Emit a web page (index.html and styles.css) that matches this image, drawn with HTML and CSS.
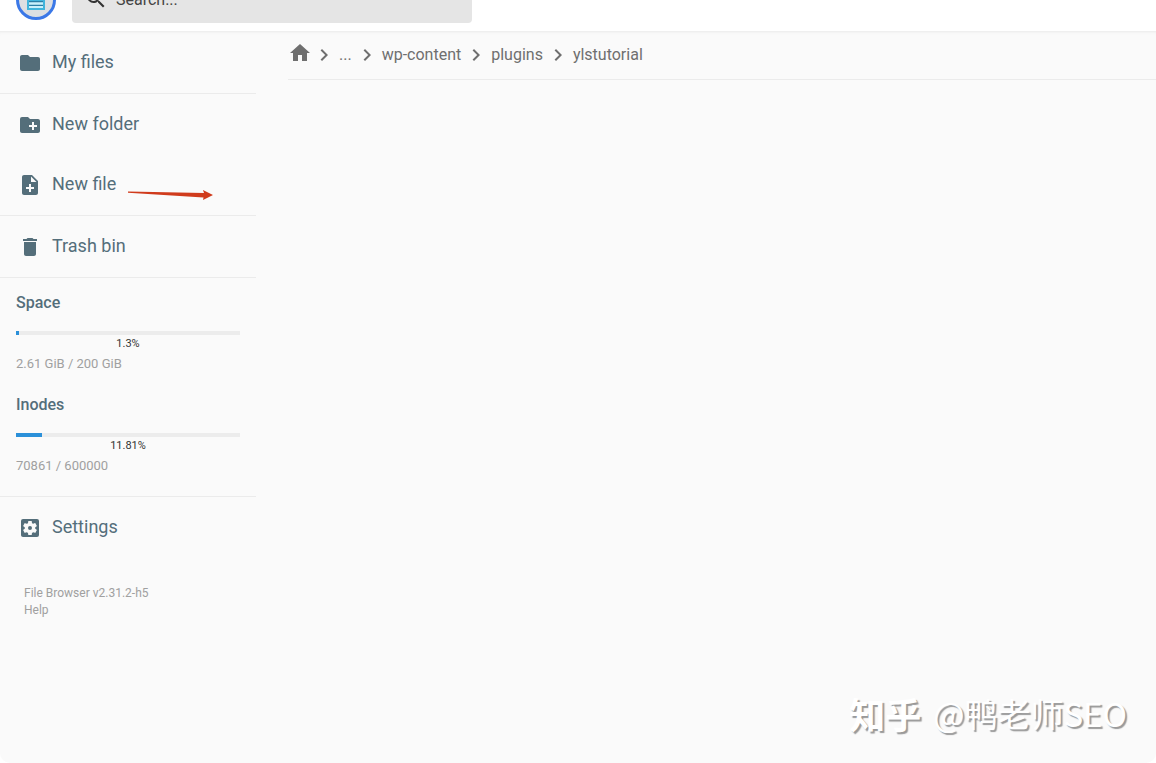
FILE: index.html
```html
<!DOCTYPE html>
<html lang="en">
<head>
<meta charset="utf-8">
<meta name="viewport" content="width=device-width, initial-scale=1">
<title>File Browser</title>
<link rel="stylesheet" href="styles.css">
</head>
<body>
<header class="topbar">
  <a class="logo" href="#" aria-label="File Browser">
    <svg viewBox="0 0 40 40" width="40" height="40">
      <circle cx="20" cy="20" r="18.5" fill="#dcdfe2" stroke="#3b78e7" stroke-width="3"/>
      <path d="M11 10h18v20H11z" fill="#3fb4dc"/>
      <path d="M13 21h14v7H13z" fill="#c9f0fb"/>
      <path d="M13 21.700h14M13 25.400h14" stroke="#2b7fa6" stroke-width="1.200"/>
    </svg>
  </a>
  <label class="search">
    <svg viewBox="0 0 24 24" width="24" height="24" aria-hidden="true"><path d="M15.500 14h-.79l-.28-.27A6.470 6.470 0 0 0 16 9.500 6.500 6.500 0 1 0 9.500 16c1.610 0 3.090-.59 4.230-1.570l.27.28v.79l5 4.990L20.490 19l-4.990-5zm-6 0a4.500 4.500 0 1 1 0-9 4.500 4.500 0 0 1 0 9z"/></svg>
    <input class="search-input" type="text" placeholder="Search..." aria-label="Search">
  </label>
</header>
<div class="layout">
  <nav class="sidebar">
    <div class="group">
      <button class="action" type="button">
        <svg viewBox="0 0 24 24" aria-hidden="true"><path d="M10 4H4c-1.100 0-2 .9-2 2v12c0 1.100.9 2 2 2h16c1.100 0 2-.9 2-2V8c0-1.100-.9-2-2-2h-8l-2-2z"/></svg>
        <span>My files</span>
      </button>
    </div>
    <div class="group">
      <button class="action" type="button">
        <svg viewBox="0 0 24 24" aria-hidden="true"><path d="M20 6h-8l-2-2H4a2 2 0 0 0-2 2v12c0 1.100.9 2 2 2h16c1.100 0 2-.9 2-2V8c0-1.100-.9-2-2-2zm-1 8h-3v3h-2v-3h-3v-2h3V9h2v3h3v2z"/></svg>
        <span>New folder</span>
      </button>
      <button class="action" type="button">
        <svg viewBox="0 0 24 24" aria-hidden="true"><path d="M14 2H6c-1.100 0-2 .9-2 2v16c0 1.100.9 2 2 2h12c1.100 0 2-.9 2-2V8l-6-6zm2 14h-3v3h-2v-3H8v-2h3v-3h2v3h3v2zm-3-7V3.500L18.500 9H13z"/></svg>
        <span>New file</span>
        <svg class="pointer" viewBox="0 0 86 12" aria-hidden="true"><path d="M0 2.500 76 4 75 1 85 6 75 11 75.500 8.500 0 3.800z"/></svg>
      </button>
    </div>
    <div class="group">
      <button class="action" type="button">
        <svg viewBox="0 0 24 24" aria-hidden="true"><path d="M6 19c0 1.100.9 2 2 2h8c1.100 0 2-.9 2-2V7H6v12zM19 4h-3.500l-1-1h-5l-1 1H5v2h14V4z"/></svg>
        <span>Trash bin</span>
      </button>
    </div>
    <div class="group usage">
      <section class="meter">
        <h2 class="meter-title">Space</h2>
        <div class="track"><div class="fill" style="width:1.3%"></div></div>
        <div class="percent">1.3%</div>
        <div class="amount">2.61 GiB / 200 GiB</div>
      </section>
      <section class="meter">
        <h2 class="meter-title">Inodes</h2>
        <div class="track"><div class="fill" style="width:11.81%"></div></div>
        <div class="percent">11.81%</div>
        <div class="amount">70861 / 600000</div>
      </section>
    </div>
    <button class="action" type="button">
      <svg viewBox="0 0 24 24" aria-hidden="true"><path d="M12 10a2 2 0 1 0 0 4 2 2 0 0 0 0-4zm7-7H5a2 2 0 0 0-2 2v14c0 1.100.9 2 2 2h14a2 2 0 0 0 2-2V5a2 2 0 0 0-2-2zm-1.750 9c0 .23-.02.46-.05.68l1.480 1.160c.13.11.17.3.08.45l-1.400 2.420c-.09.15-.27.21-.43.15l-1.740-.7c-.36.28-.76.51-1.180.69l-.26 1.850c-.03.17-.18.3-.35.3h-2.800c-.17 0-.32-.13-.35-.29l-.26-1.850c-.43-.18-.82-.41-1.180-.69l-1.740.7c-.16.06-.34 0-.43-.15l-1.400-2.420a.35.35 0 0 1 .08-.45l1.480-1.160A5.600 5.600 0 0 1 6.750 12c0-.23.02-.46.05-.69l-1.480-1.160a.35.35 0 0 1-.08-.45l1.400-2.420c.09-.15.27-.21.43-.15l1.740.7c.36-.28.76-.51 1.180-.69l.26-1.850c.03-.17.18-.3.35-.3h2.800c.17 0 .32.13.35.29l.26 1.850c.43.18.82.41 1.180.69l1.740-.7c.16-.06.34 0 .43.15l1.400 2.420c.09.15.05.34-.08.45l-1.480 1.160c.03.23.05.46.05.7z"/></svg>
      <span>Settings</span>
    </button>
    <div class="credits">
      <span>File Browser v2.31.2-h5</span>
      <a href="#">Help</a>
    </div>
  </nav>
  <main class="content">
    <nav class="breadcrumbs" aria-label="Breadcrumbs">
      <a class="home" href="#" aria-label="Home"><svg viewBox="0 0 24 24" aria-hidden="true"><path d="M10 20v-6h4v6h5v-8h3L12 3 2 12h3v8z"/></svg></a>
      <svg class="chevron" viewBox="6 0 12 24" aria-hidden="true"><path d="M10 6 8.590 7.410 13.170 12l-4.580 4.590L10 18l6-6z"/></svg>
      <a href="#">...</a>
      <svg class="chevron" viewBox="6 0 12 24" aria-hidden="true"><path d="M10 6 8.590 7.410 13.170 12l-4.580 4.590L10 18l6-6z"/></svg>
      <a href="#">wp-content</a>
      <svg class="chevron" viewBox="6 0 12 24" aria-hidden="true"><path d="M10 6 8.590 7.410 13.170 12l-4.580 4.590L10 18l6-6z"/></svg>
      <a href="#">plugins</a>
      <svg class="chevron" viewBox="6 0 12 24" aria-hidden="true"><path d="M10 6 8.590 7.410 13.170 12l-4.580 4.590L10 18l6-6z"/></svg>
      <a href="#">ylstutorial</a>
    </nav>
  </main>
  <div class="watermark"><b>知乎</b><span>@鸭老师SEO</span></div>
</div>
</body>
</html>
```
FILE: styles.css
```css
* { box-sizing: border-box; }

body {
  margin: 0;
  min-height: 100vh;
  display: flex;
  flex-direction: column;
  background: #fff;
  color: #546e7a;
  font-family: Roboto, "Liberation Sans", sans-serif;
  font-size: 16px;
}

svg { display: block; fill: currentColor; flex: none; }
a { color: inherit; text-decoration: none; }

/* Header: its content is anchored to the bottom edge */
.topbar {
  height: 32px;
  padding: 0 16px 8px;
  display: flex;
  align-items: flex-end;
  gap: 16px;
  overflow: hidden;
  border-bottom: 1px solid #efefef;
}

.logo, .search {
  height: 48px;
  display: flex;
  align-items: center;
  flex: none;
}

.logo { padding-top: 2px; }

.search {
  width: 400px;
  max-width: 80%;
  padding: 0 12px;
  gap: 8px;
  border-radius: 4px;
  background: #e5e5e5;
  color: #333;
}

.search-input {
  flex: 1;
  min-width: 0;
  padding: 0;
  border: 0;
  outline: 0;
  background: transparent;
  color: #333;
  font: inherit;
}
.search-input::placeholder { color: #444; opacity: 1; }

.layout {
  position: relative;
  flex: 1;
  display: flex;
  gap: 32px;
  background: #fafafa;
  border-radius: 0 0 10px 10px;
  box-shadow: inset 0 3px 3px -2px #f2f2f2;
}

.sidebar { width: 256px; flex: none; }

.group {
  padding-bottom: 1px;
  border-bottom: 1px solid #ebebeb;
}

.action {
  position: relative;
  width: 100%;
  height: 60px;
  padding: 2px 18px 0;
  display: flex;
  align-items: center;
  gap: 10px;
  border: 0;
  background: none;
  color: inherit;
  font: inherit;
  font-size: 18px;
  text-align: left;
  cursor: pointer;
}
.action svg { width: 24px; height: 24px; }
.action span { padding-bottom: 4px; }

.action .pointer {
  position: absolute;
  left: 128px;
  top: 35px;
  width: 86px;
  height: 12px;
  fill: #d03b1c;
}

.usage { padding: 13px 16px; }
.meter { height: 102px; }
.meter:last-child { height: 90px; }

.meter-title {
  margin: 0 0 16px;
  font-size: 16px;
  line-height: 24px;
  font-weight: 500;
}

.track { height: 4px; background: #ececec; }
.fill { height: 100%; background: #2b90d9; }

.percent {
  color: #333;
  font-size: 11px;
  line-height: 18px;
  text-align: center;
}

.amount {
  margin-top: 2px;
  color: #a0a0a0;
  font-size: 13px;
  line-height: 18px;
}

.credits {
  display: flex;
  flex-direction: column;
  padding: 28px 24px;
  color: #a0a0a0;
  font-size: 12px;
  line-height: 17px;
}

.content { flex: 1; min-width: 0; }

.breadcrumbs {
  height: 48px;
  padding-bottom: 2px;
  display: flex;
  align-items: center;
  gap: 9px;
  border-bottom: 1px solid #ebebeb;
  color: #6f6f6f;
}
.breadcrumbs svg { width: 24px; height: 24px; }
.breadcrumbs .chevron { width: 12px; }
.breadcrumbs .home { margin-right: -3px; padding-bottom: 4px; }

.watermark {
  position: absolute;
  right: 29px;
  bottom: 24px;
  display: flex;
  align-items: center;
  gap: 12px;
  color: #fff;
  font-family: "Noto Sans CJK SC", sans-serif;
  font-size: 33px;
  line-height: 52px;
  text-shadow: 2px 2px 1px #999;
}
.watermark b { font-size: 36px; }
```
